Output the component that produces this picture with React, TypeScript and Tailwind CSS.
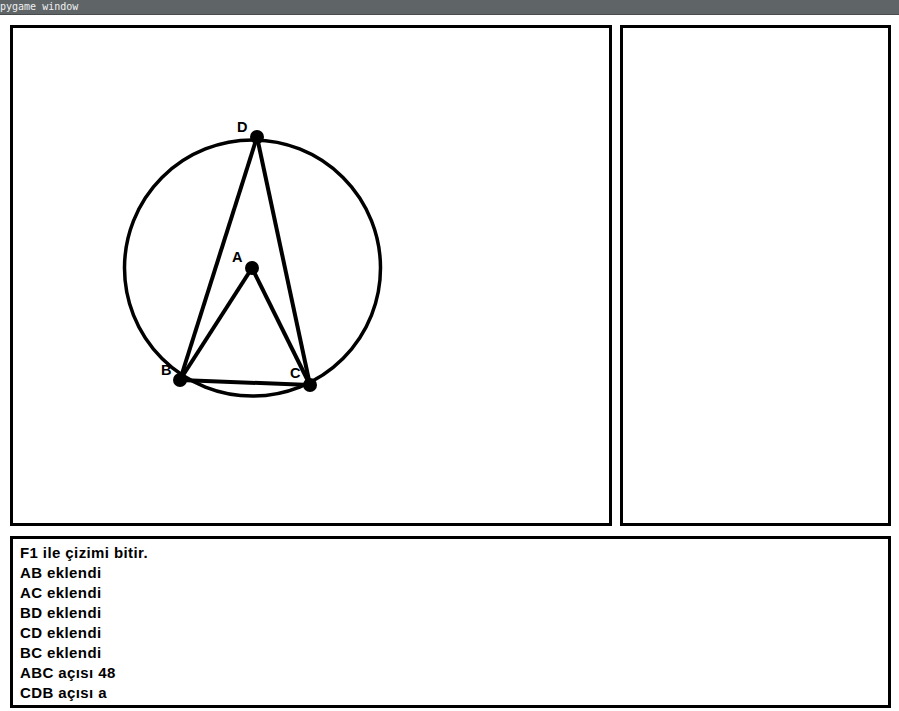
import React from "react";

const lines = [
  "F1 ile çizimi bitir.",
  "AB eklendi",
  "AC eklendi",
  "BD eklendi",
  "CD eklendi",
  "BC eklendi",
  "ABC açısı 48",
  "CDB açısı a",
];

const pts = {
  A: [252, 268],
  B: [180, 380],
  C: [310, 385],
  D: [257, 137],
};

const labels: [string, number, number][] = [
  ["D", 237, 132],
  ["A", 232, 262],
  ["B", 161, 375],
  ["C", 290, 378],
];

const segs: [keyof typeof pts, keyof typeof pts][] = [
  ["A", "B"],
  ["A", "C"],
  ["B", "D"],
  ["C", "D"],
  ["B", "C"],
];

function Canvas() {
  return (
    <svg width="596" height="495" viewBox="13 28 596 495" className="block">
      {labels.map(([t, x, y]) => (
        <text
          key={t}
          x={x}
          y={y}
          fontFamily="'Liberation Sans', Arial, sans-serif"
          fontWeight="bold"
          fontSize="14.5"
          fill="#000"
        >
          {t}
        </text>
      ))}
      <circle cx="252.5" cy="268" r="128" fill="none" stroke="#000" strokeWidth="3.5" />
      {segs.map(([a, b]) => (
        <line
          key={a + b}
          x1={pts[a][0]}
          y1={pts[a][1]}
          x2={pts[b][0]}
          y2={pts[b][1]}
          stroke="#000"
          strokeWidth="4"
        />
      ))}
      {Object.entries(pts).map(([k, [x, y]]) => (
        <circle key={k} cx={x} cy={y} r="7" fill="#000" />
      ))}
    </svg>
  );
}

export default function App() {
  return (
    <div className="w-[899px] h-[711px] bg-white overflow-hidden">
      {/* title bar */}
      <div className="h-[15px] bg-[#5f6566] border-b border-[#484c4d] flex items-center">
        <span className="text-[10px] leading-none text-[#eef0f0] font-['DejaVu_Sans_Mono',monospace]">
          pygame window
        </span>
      </div>

      <div className="pl-[10px] pt-[10px]">
        <div className="flex gap-[8px]">
          <div className="w-[602px] h-[501px] border-[3px] border-black overflow-hidden">
            <Canvas />
          </div>
          <div className="w-[271px] h-[501px] border-[3px] border-black" />
        </div>

        {/* log */}
        <div className="mt-[10px] w-[881px] h-[172px] border-[3px] border-black pl-[7px] pt-[4px]">
          {lines.map((l) => (
            <div
              key={l}
              className="text-[15px] leading-[20px] font-bold tracking-[0.4px] text-black font-['Liberation_Sans',Arial,sans-serif]"
            >
              {l}
            </div>
          ))}
        </div>
      </div>
    </div>
  );
}
